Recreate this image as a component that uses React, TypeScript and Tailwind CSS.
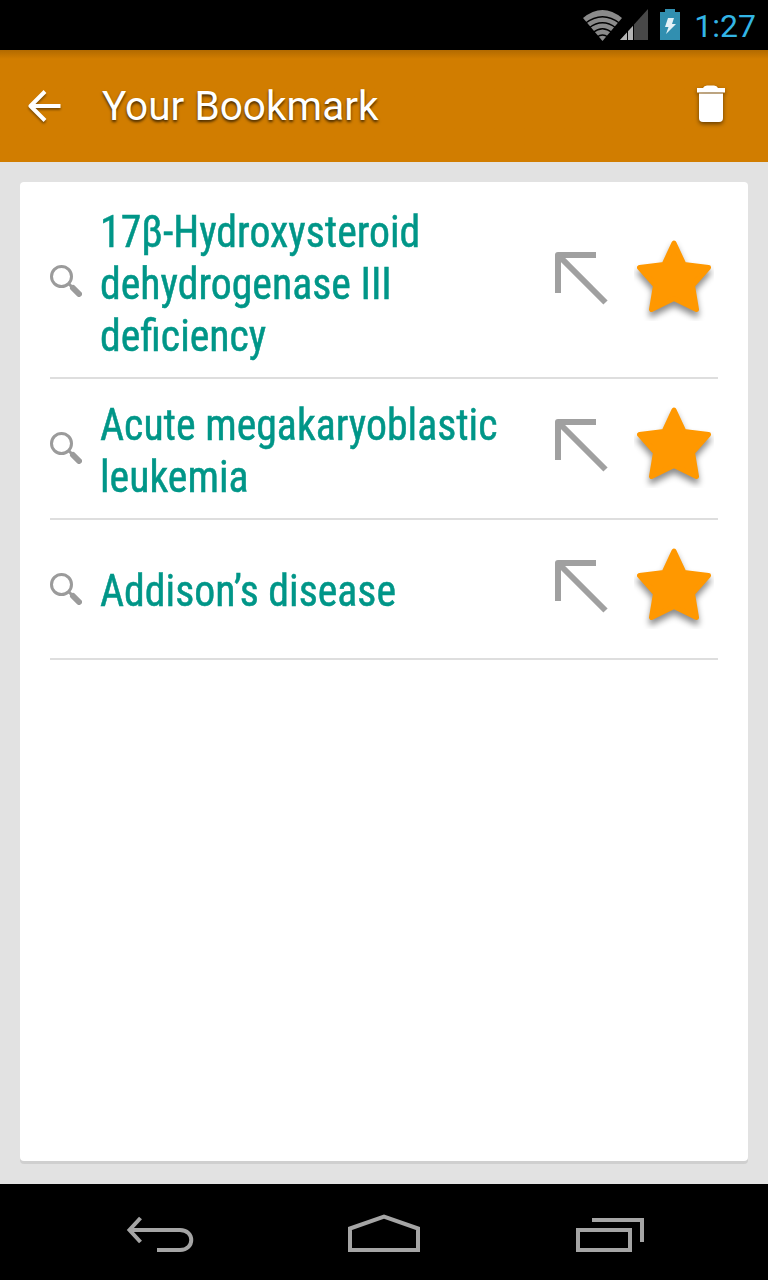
import React from "react"

interface Bookmark {
    id: number;
    title: string;
    height: string;
}

const bookmarks: Bookmark[] = [
    { id: 1, title: "17β-Hydroxysteroid dehydrogenase III deficiency", height: "h-[194px]" },
    { id: 2, title: "Acute megakaryoblastic leukemia", height: "h-[141px] pb-px" },
    { id: 3, title: "Addison’s disease", height: "h-[140px] [&>p]:mt-[3px]" },
]

function StatusBar() {
    return (
        <div className="flex h-[50px] shrink-0 items-center justify-end bg-black pr-3">
            <svg width="66" height="34" viewBox="582 8 66 34" fill="none">
                <path d="M583 18Q602.500 2 622 18L602.500 41Z" fill="#8a8a8a" />
                <path d="M585 23.500Q602.500 10 620 23.500M589 28Q602.500 17.500 616 28M593 32.500Q602.500 25 612 32.500M597 37Q602.500 33 608 37" stroke="#000" strokeWidth="1.300" />
                <path d="M648 9V40H620Z" fill="#484848" />
                <path d="M633 26V40H620Z" fill="#b4b4b4" />
                <path d="M627.500 30V40M633.500 24V40" stroke="#000" strokeWidth="1" />
            </svg>
            <svg className="mb-px ml-3" width="20" height="31" viewBox="0 0 20 31">
                <path d="M5 0H15V3H20V31H0V3H5Z" fill="#318fb0" />
                <path d="M8 9H14L12 15H16L6 25L8.500 18H5Z" fill="#e4f1f7" />
            </svg>
            <span className="mt-[3px] ml-[14px] w-[62px] text-right font-['Roboto'] text-[32px] leading-[47px] text-[#33b5e5]">1:27</span>
        </div>
    )
}

function Header() {
    return (
        <div className="flex h-28 shrink-0 items-center bg-linear-to-b from-[#b26a00] to-[#d17d00] to-8% pr-10 pl-[27px]">
            <svg className="drop-shadow-[0_2px_1px_rgba(0,0,0,0.4)]" width="34" height="36" viewBox="0 0 34 36" fill="none" stroke="#fff" strokeWidth="4">
                <path d="M33.500 18H4M18 3.500L3.500 18L18 32.500" strokeLinejoin="round" />
            </svg>
            <h1 className="ml-[41px] flex-1 font-['Roboto'] text-[40.600px] leading-none text-white [text-shadow:0_2px_3px_rgba(0,0,0,0.7)]">Your Bookmark</h1>
            <svg className="mb-1 drop-shadow-[0_2px_2px_rgba(0,0,0,0.5)]" width="34" height="38" viewBox="0 0 34 38" fill="#fff">
                <path d="M3 3H9Q10 0.500 13 0.500H20Q23 0.500 24 3H31V7.500H3Z" />
                <path d="M5 8.500H29V33Q29 37 25 37H9Q5 37 5 33Z" />
            </svg>
        </div>
    )
}

function SearchIcon() {
    return (
        <svg className="shrink-0" width="32" height="32" viewBox="0 0 32 32" fill="none" stroke="#9b9b9b">
            <circle cx="11.500" cy="11.500" r="10" strokeWidth="3" />
            <path d="M18.500 18.500L22 22" strokeWidth="3" />
            <path d="M23 23L29 29" strokeWidth="6" strokeLinecap="round" />
        </svg>
    )
}

function ArrowIcon() {
    return (
        <svg className="mb-[6px] shrink-0" width="54" height="54" viewBox="0 0 54 54" fill="none" stroke="#a0a0a0" strokeWidth="6">
            <path d="M42 4H4V42" strokeLinejoin="round" />
            <path d="M4 4L51.500 51.500" />
        </svg>
    )
}

function StarIcon() {
    return (
        <svg className="mb-[2px] shrink-0 overflow-hidden" width="80" height="81" viewBox="0 0 80 81">
            <path
                className="drop-shadow-[0_5px_3px_rgba(0,0,0,0.45)]"
                d="M40 3L50 24.500L74.500 27.500L58.500 45.500L62.500 69.500L40 58.500L17.500 69.500L21.500 45.500L5.500 27.500L30 24.500Z"
                fill="#ff9800"
                stroke="#ff9800"
                strokeWidth="5"
                strokeLinejoin="round"
            />
        </svg>
    )
}

function BookmarkRow({ title, height }: { title: string; height: string }) {
    return (
        <li className={`flex items-center border-b-2 border-[#dedede] ${height}`}>
            <SearchIcon />
            <p className="mt-[5px] ml-[18px] w-[430px] origin-left scale-x-[0.95] font-['Roboto_Condensed','Roboto'] text-[44px] leading-[52px] font-stretch-75% text-[#009688] [-webkit-text-stroke:0.5px_#009688]">{title}</p>
            <div className="ml-6 flex items-center gap-[26px]">
                <ArrowIcon />
                <StarIcon />
            </div>
        </li>
    )
}

function NavBar() {
    return (
        <div className="flex h-24 shrink-0 items-center bg-black pt-1 pl-[126px]">
            <svg width="68" height="40" viewBox="0 0 68 40" fill="none" stroke="#a5a5a5" strokeWidth="4">
                <path d="M31 36H54C69 36 69 16 54 16H4" />
                <path d="M14.500 4L3.500 16L14.500 28" />
            </svg>
            <svg className="ml-[154px]" width="72" height="40" viewBox="0 0 72 40" fill="none" stroke="#a5a5a5" strokeWidth="4">
                <path d="M2 36V14.500L36 2.500L70 14.500V36Z" />
            </svg>
            <svg className="ml-[156px]" width="68" height="40" viewBox="0 0 68 40" fill="none" stroke="#a5a5a5" strokeWidth="4">
                <path d="M2 16H54V36H2Z" />
                <path d="M16 6H66V28" />
            </svg>
        </div>
    )
}

export default function App() {
    return (
        <div className="flex h-[1280px] w-[768px] flex-col overflow-hidden bg-[#e2e2e2]">
            <StatusBar />
            <Header />
            <div className="flex flex-1 px-5 pt-5 pb-[23px]">
                <ul className="w-full rounded-[4px] bg-white px-[30px] pt-[3px] shadow-[0_3px_0_#cfcfcf]">
                    {
                        bookmarks.map((item) => (
                            <BookmarkRow key={item.id} title={item.title} height={item.height} />
                        ))
                    }
                </ul>
            </div>
            <NavBar />
        </div>
    )
}
